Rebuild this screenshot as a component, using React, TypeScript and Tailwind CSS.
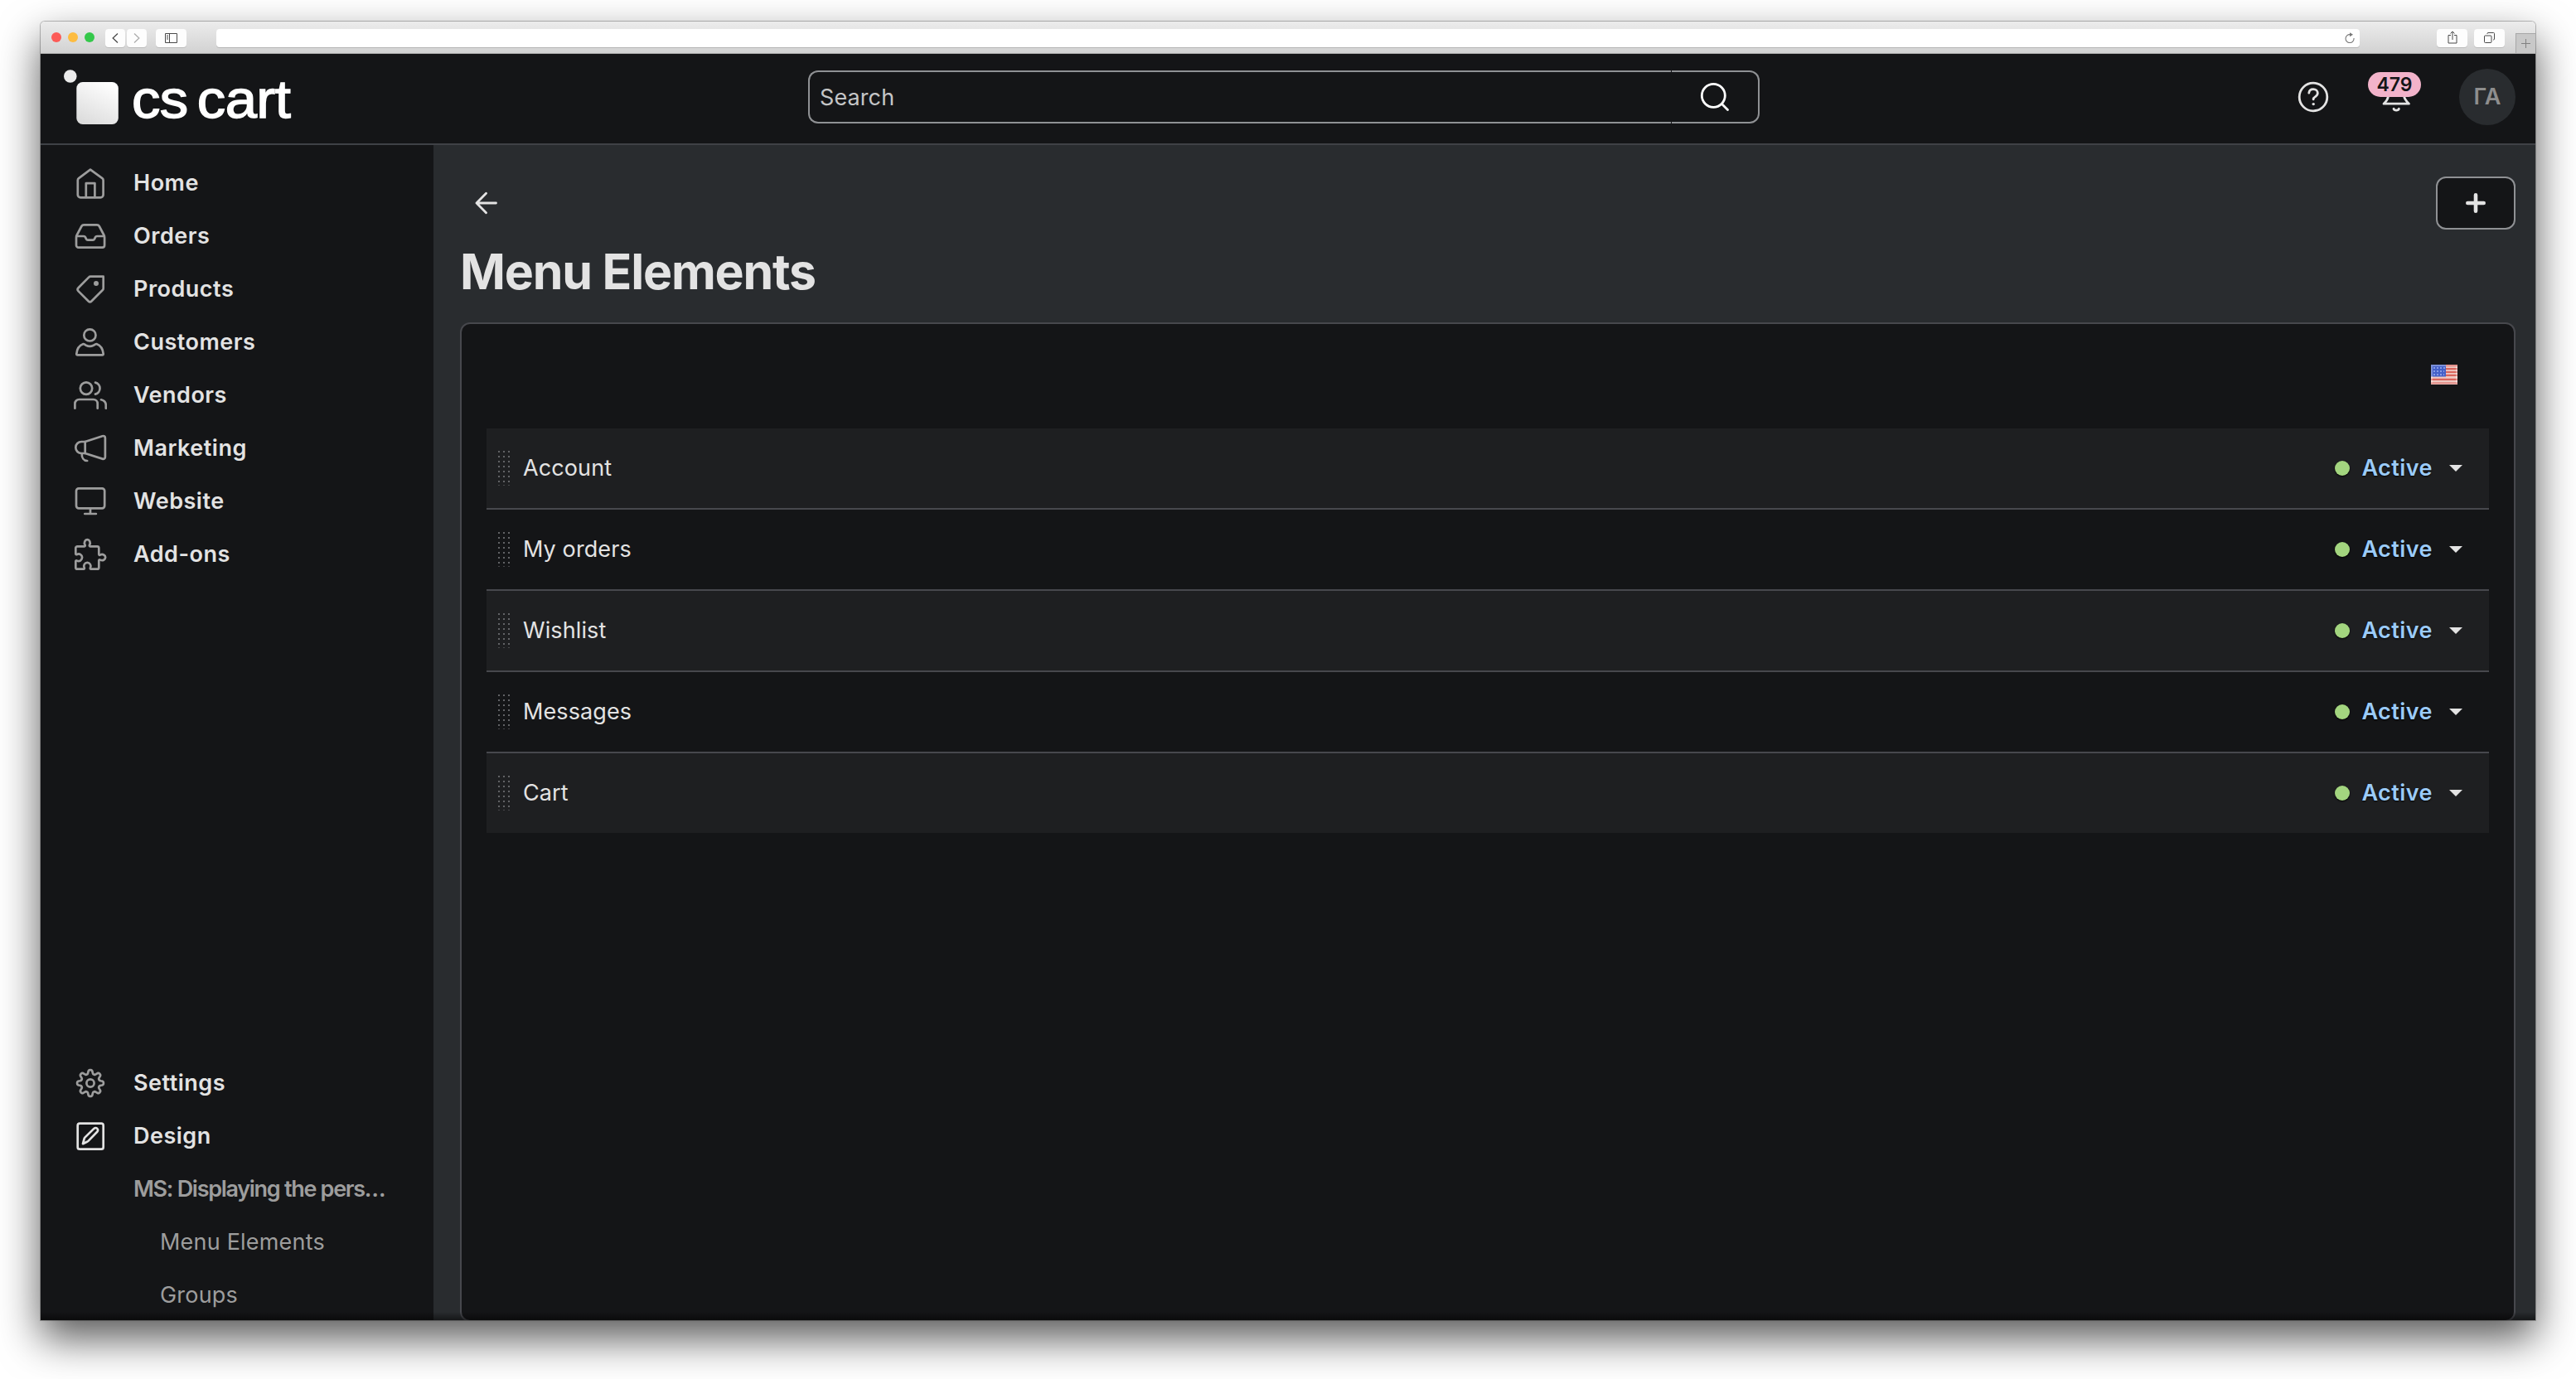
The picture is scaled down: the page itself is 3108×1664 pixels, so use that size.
import type { ReactNode } from "react";
import clsx from "clsx";

type NavItem = {
  label: string;
  icon: ReactNode;
  active?: boolean;
};

// gear outline with eight rounded teeth
const gearPoints = Array.from({ length: 144 }, (_, i) => {
  const a = (i / 144) * Math.PI * 2;
  const r = 13.6 + 2.3 * Math.tanh(1.7 * Math.cos(a * 8)) / 0.935;
  return `${(20 + r * Math.cos(a)).toFixed(2)},${(20 + r * Math.sin(a)).toFixed(2)}`;
}).join(" ");

const mainNav: NavItem[] = [
  {
    label: "Home",
    icon: (
      <>
        <path d="M4.8 16.4c0-1 .4-1.7 1.2-2.3L20 3.6l14.4 10.5c.8.6 1.2 1.3 1.2 2.3V34a3.3 3.3 0 0 1-3.3 3.3H8.1A3.3 3.3 0 0 1 4.8 34z" />
        <path d="M14.8 37V20.2h10.6V37" />
      </>
    ),
  },
  {
    label: "Orders",
    icon: (
      <>
        <path d="M12.2 6.3h15.8c1.3 0 2.2.6 2.8 1.7L36.3 18.5c.6 1.1.8 2 .8 3.2V31a2.7 2.7 0 0 1-2.7 2.7H5.7A2.7 2.7 0 0 1 3 31v-9.3c0-1.2.2-2.1.8-3.2L9.4 8c.6-1.1 1.5-1.7 2.8-1.7z" />
        <path d="M3.3 20h8.7c1 0 1.6.4 2 1.2l1 2.2c.4.9 1 1.3 2 1.3h6c1 0 1.6-.4 2-1.3l1-2.2c.4-.8 1-1.2 2-1.2h8.8" />
      </>
    ),
  },
  {
    label: "Products",
    icon: (
      <>
        <path d="M20.3 4.7h15.4v14.2c0 .8-.3 1.5-.9 2.1L21.6 34.3c-1.3 1.3-2.8 1.3-4.1 0L5.6 22.4c-1.3-1.3-1.3-2.8 0-4.1L18.1 5.6c.6-.6 1.3-.9 2.2-.9z" />
        <circle cx="27" cy="13" r="3" fill="currentColor" stroke="none" />
      </>
    ),
  },
  {
    label: "Customers",
    icon: (
      <>
        <circle cx="19.4" cy="11.4" r="7.1" />
        <path d="M11.5 22c-4.8 1.8-7.8 6.5-8.2 12-.1.9.4 1.4 1.3 1.4h29.8c.9 0 1.4-.5 1.3-1.4-.5-5.5-3.4-10.2-8.2-12-1.4 0-2 1-3.7 1.8-2.7 1.3-6.2 1.3-8.9 0-1.5-.8-2.2-1.8-3.4-1.8z" />
      </>
    ),
  },
  {
    label: "Vendors",
    icon: (
      <>
        <circle cx="15" cy="11.6" r="7.2" />
        <path d="M26 4.6a7.2 7.2 0 0 1 0 14" />
        <path d="M1.4 35.7V30a5 5 0 0 1 5-5h17.3a5 5 0 0 1 5 5v5.7" />
        <path d="M33 25.3c3.6.9 5.8 3.3 5.8 6.7v3.7" />
      </>
    ),
  },
  {
    label: "Marketing",
    icon: (
      <>
        <path d="M13.7 12 34.5 5.2c2-.6 3.4.4 3.4 2.4v22.6c0 2-1.4 3-3.4 2.4L13.7 26z" />
        <path d="M13.7 12H9.3a7 7 0 0 0 0 14h4.4" />
        <path d="M9.7 26.4c-.2 4.6 2.2 8.4 6.5 8.6" />
      </>
    ),
  },
  {
    label: "Website",
    icon: (
      <>
        <rect x="3" y="4.3" width="34.2" height="24" rx="3" />
        <path d="M20 28.5V35M13.3 35h13.6" />
      </>
    ),
  },
  {
    label: "Add-ons",
    icon: (
      <path d="M4.3 10.3h8.5c.9 0 1.2-.8.8-1.6-1.8-3 0-6.5 2.7-6.5s4.500 3.500 2.700 6.500c-.4.800-.1 1.600.8 1.600h8.500a2 2 0 0 1 2 2v7.500c0 .9.800 1.200 1.600.8 3-1.600 6.300.3 6.300 3s-3.300 4.600-6.300 3c-.8-.4-1.600-.1-1.600.8v8.300a2 2 0 0 1-2 2h-7.500c-.9 0-1.200-.8-.8-1.600 1.600-3-.8-6.200-3.700-6.200s-5.200 3.200-3.600 6.200c.4.800.1 1.600-.8 1.600H4.300a2 2 0 0 1-2-2v-7.300c0-.9.800-1.200 1.600-.8 3 1.600 6.200-1 6.200-4s-3.200-5.200-6.200-3.600c-.8.4-1.600.1-1.600-.8v-6.900a2 2 0 0 1 2-2z" />
    ),
  },
];

const bottomNav: NavItem[] = [
  {
    label: "Settings",
    icon: (
      <>
        <polygon points={gearPoints} />
        <circle cx="20" cy="20" r="4.6" />
      </>
    ),
  },
  {
    label: "Design",
    active: true,
    icon: (
      <>
        <rect x="4.7" y="4.7" width="31" height="31" rx="2.5" />
        <path d="M11 29.2l1.6-6.1c.2-.7.5-1.2 1-1.7L24.3 10.9c1.3-1.2 2.9-1.2 4 0 1.1 1.1 1.1 2.7-.1 3.9L17.7 25.6c-.5.5-1 .8-1.7 1.1z" />
      </>
    ),
  },
];

const elements = ["Account", "My orders", "Wishlist", "Messages", "Cart"];

function BrowserBar() {
  return (
    <div className="flex h-[39px] shrink-0 items-center border-b border-[#adadad] bg-linear-to-b from-[#ececec] to-[#d2d2d2] pl-[13px]">
      <div className="flex gap-2">
        <span className="h-3 w-3 rounded-full bg-[#fc5b57]" />
        <span className="h-3 w-3 rounded-full bg-[#fdbc40]" />
        <span className="h-3 w-3 rounded-full bg-[#34c84a]" />
      </div>
      <div className="ml-[13px] mt-px flex gap-0.5">
        <div className="flex h-[22px] w-6 items-center justify-center rounded-[4px] bg-[#fdfdfd] shadow-[0_1px_0_#bcbcbc]">
          <svg className="h-3 w-2" viewBox="0 0 8 12" fill="none" stroke="#4a4a4a" strokeWidth="1.3">
            <path d="M7 .6 1.2 6 7 11.4" />
          </svg>
        </div>
        <div className="flex h-[22px] w-6 items-center justify-center rounded-[4px] bg-[#fdfdfd] shadow-[0_1px_0_#bcbcbc]">
          <svg className="h-3 w-2" viewBox="0 0 8 12" fill="none" stroke="#adadad" strokeWidth="1.3">
            <path d="M1 .6 6.8 6 1 11.4" />
          </svg>
        </div>
      </div>
      <div className="ml-[11px] mt-px flex h-[22px] w-[37px] items-center justify-center rounded-[4px] bg-[#fdfdfd] shadow-[0_1px_0_#bcbcbc]">
        <svg className="h-3 w-[15px]" viewBox="0 0 15 12" fill="none" stroke="#4a4a4a">
          <path d="M.5.5h14v11H.5zM5.5.5v11M2 3h2M2 5h2M2 7h2" />
        </svg>
      </div>
      <div className="ml-9 mt-px flex h-[22px] w-[2586px] items-center justify-end rounded-[4px] bg-white pr-1.5 shadow-[0_1px_0_#b5b5b5]">
        <svg className="h-[13px] w-3" viewBox="0 0 12 13" fill="none" stroke="#777" strokeWidth="1.1">
          <path d="M6.5 2.6A5 5 0 1 0 11 7" />
          <path d="M6 .2 10 2.7 6 5.2z" fill="#777" stroke="none" />
        </svg>
      </div>
      <div className="ml-[93px] mt-px flex h-[22px] w-[37px] items-center justify-center rounded-[4px] bg-[#fdfdfd] shadow-[0_1px_0_#bcbcbc]">
        <svg className="mb-px h-4 w-3" viewBox="0 0 12 16" fill="none" stroke="#4a4a4a">
          <path d="M4 5.5H1V15h10V5.5H8M6 11V1.2M3.5 3.5 6 1l2.5 2.5" />
        </svg>
      </div>
      <div className="ml-2 mt-px flex h-[22px] w-[37px] items-center justify-center rounded-[4px] bg-[#fdfdfd] shadow-[0_1px_0_#bcbcbc]">
        <svg className="h-[13px] w-[13px]" viewBox="0 0 13 13" fill="none" stroke="#4a4a4a">
          <rect x=".5" y="4" width="8.5" height="8.5" rx="1" />
          <path d="M4 2v-.5a1 1 0 0 1 1-1h6.5a1 1 0 0 1 1 1V8a1 1 0 0 1-1 1H11" />
        </svg>
      </div>
      <div className="ml-auto flex h-6 w-6 items-center justify-center self-end border-l border-t border-[#a8a8a8] bg-[#c8c8c8]">
        <svg className="h-[11px] w-[11px]" viewBox="0 0 11 11" stroke="#808080">
          <path d="M5.5 0v11M0 5.5h11" />
        </svg>
      </div>
    </div>
  );
}

function Logo() {
  return (
    <div className="flex w-[898px] shrink-0 items-center">
      <svg className="h-[66px] w-[66px]" viewBox="0 0 66 66">
        <defs>
          <linearGradient id="tile" x1=".75" y1="0" x2=".25" y2="1">
            <stop offset="0" stopColor="#fff" />
            <stop offset="1" stopColor="#dcdcdc" />
          </linearGradient>
        </defs>
        <circle cx="7.8" cy="8" r="7.8" fill="#ebebeb" />
        <rect x="15.3" y="15" width="50.5" height="51" rx="7.5" fill="url(#tile)" />
      </svg>
      <span className="ml-4 mt-1.5 origin-left scale-x-[1.075] whitespace-nowrap font-['Liberation_Sans'] text-[64px] leading-none tracking-[-0.5px] text-white [-webkit-text-stroke:1.4px_white] [word-spacing:-7px]">
        cs cart
      </span>
    </div>
  );
}

function SearchBox() {
  return (
    <div className="flex h-16 w-[1148px] shrink-0 gap-px">
      <div className="flex w-[1041px] items-center rounded-l-xl border-y-2 border-l-2 border-[#8f9194] pl-3 pt-0.5">
        <span className="text-[27px] tracking-[0.1px] text-[#c4c5c6]">Search</span>
      </div>
      <div className="flex flex-1 items-center rounded-r-xl border-y-2 border-r-2 border-[#8f9194] pl-[34px]">
        <svg className="h-9 w-9" viewBox="0 0 36 36" fill="none" stroke="#fff" strokeWidth="2.8" strokeLinecap="round">
          <circle cx="16.3" cy="16.3" r="14" />
          <path d="M26.5 26.5 33.5 33.5" />
        </svg>
      </div>
    </div>
  );
}

function Header() {
  return (
    <header className="flex h-[110px] shrink-0 items-center border-b-2 border-[#3f4146] bg-[#141517] pb-1 pl-7 pr-6">
      <Logo />
      <SearchBox />
      <div className="ml-auto flex items-center">
        <svg className="h-10 w-10 text-[#e3e3e3]" viewBox="0 0 40 40" fill="none" stroke="currentColor" strokeWidth="2.8" strokeLinecap="round">
          <circle cx="20" cy="20" r="16.8" />
          <path d="M14.8 15.2c.3-2.8 2.3-4.5 5.2-4.5 3.1 0 5.3 1.8 5.3 4.6 0 2-1 3.2-2.8 4.3-1.8 1.1-2.4 1.7-2.4 3.3" />
          <circle cx="20.2" cy="28.6" r="1.7" fill="currentColor" stroke="none" />
        </svg>
        <div className="relative ml-[60px] h-10 w-10">
          <svg className="h-10 w-10 text-[#e3e3e3]" viewBox="0 0 40 40" fill="none" stroke="currentColor" strokeWidth="2.8" strokeLinecap="round" strokeLinejoin="round">
            <path d="M10.5 12v6c0 3.5-1.5 6.5-5.5 10.2h30.5c-4-3.7-6-6.7-6-10.2v-6" />
            <path d="M17 34.3c.8 2.4 5.6 2.4 6.4 0" />
          </svg>
          <span className="absolute -left-3.5 -top-2.5 flex h-[30px] w-16 items-center justify-center rounded-full bg-[#f2b3ca] text-[23px] font-semibold leading-none text-[#141517]">
            479
          </span>
        </div>
        <div className="ml-14 flex h-[68px] w-[68px] items-center justify-center rounded-full bg-[#292c2f] pt-px text-[27px] font-semibold text-[#8e8e8e]">
          ГА
        </div>
      </div>
    </header>
  );
}

function NavRow({ item }: { item: NavItem }) {
  return (
    <div className="flex h-16 shrink-0 items-center pl-10">
      <svg
        className={clsx("h-10 w-10", item.active ? "text-[#e3e3e3]" : "text-[#9d9d9d]")}
        viewBox="0 0 40 40"
        fill="none"
        stroke="currentColor"
        strokeWidth="2.7"
        strokeLinecap="round"
        strokeLinejoin="round"
      >
        {item.icon}
      </svg>
      <span className="ml-8 pt-px text-[27px] font-semibold tracking-[0.5px] text-[#e3e3e3]">{item.label}</span>
    </div>
  );
}

function Sidebar() {
  return (
    <nav className="flex w-[474px] shrink-0 flex-col bg-[#141517] pt-3.5">
      {mainNav.map((item) => (
        <NavRow key={item.label} item={item} />
      ))}
      <div className="mt-[574px] shrink-0">
        {bottomNav.map((item) => (
          <NavRow key={item.label} item={item} />
        ))}
        <div className="flex h-16 items-center whitespace-nowrap pl-28 pt-px text-[27px] font-semibold tracking-[-1.3px] text-[#9d9d9d]">
          MS: Displaying the pers…
        </div>
        <div className="flex h-16 items-center pl-36 pt-px text-[27px] tracking-[0.2px] text-[#9d9d9d]">Menu Elements</div>
        <div className="flex h-16 items-center pl-36 pt-px text-[27px] tracking-[0.2px] text-[#9d9d9d]">Groups</div>
      </div>
    </nav>
  );
}

function Flag() {
  return (
    <svg className="h-6 w-8" viewBox="0 0 32 24">
      <rect width="32" height="24" fill="#eec9c3" />
      <path d="M0 1.2h32M0 5.2h32M0 9h32M0 12.8h32M0 17.8h32M0 22.5h32" stroke="#d9655c" strokeWidth="2.2" />
      <rect width="18" height="14.5" fill="#4460c8" />
      <path d="M3 4h14M3 8h13M3 12h13" stroke="#9db0ee" strokeWidth="1.6" strokeDasharray="2 2" />
      <rect x="1" y="1" width="30" height="22" fill="none" stroke="#fff" strokeOpacity=".3" strokeWidth="2" />
    </svg>
  );
}

function DragHandle() {
  return (
    <svg className="h-[42px] w-3.5" viewBox="0 0 14 42" fill="#626366">
      {[0, 6, 12, 18, 24, 30, 36].map((y) =>
        [0, 6, 12].map((x) => <rect key={`${x}-${y}`} x={x} y={y} width="2" height="2" />),
      )}
      {[0, 6, 12].map((x) => (
        <rect key={x} x={x} y="41" width="2" height="1" opacity=".6" />
      ))}
    </svg>
  );
}

function ElementRow({ name }: { name: string }) {
  return (
    <div className="flex h-[98px] items-center border-b-2 border-[#47484d] pl-3.5 pr-8 odd:bg-[#1e1f21] last:h-24 last:border-b-0">
      <DragHandle />
      <span className="ml-4 text-[27px] tracking-[0.1px] text-[#e3e3e3]">{name}</span>
      <span className="ml-auto h-[18px] w-[18px] rounded-full bg-[#a3d57f] shadow-[0_1px_2px_#000]" />
      <span className="ml-3.5 text-[27px] font-semibold tracking-[0.45px] text-[#9bcbf8] [text-shadow:0_1px_2px_#000]">
        Active
      </span>
      <svg className="ml-5 h-2 w-4" viewBox="0 0 16 8">
        <path d="M0 0h16L8 8z" fill="#e3e3e3" />
      </svg>
    </div>
  );
}

export default function App() {
  return (
    <div className="h-[1664px] w-[3108px] overflow-hidden bg-white px-[49px] pt-[26px] font-['Inter',sans-serif]">
      <div className="rounded-t-[5px] shadow-[0_0_0_1px_rgba(0,0,0,0.25),0_22px_50px_rgba(0,0,0,0.66)]">
        <div className="relative flex h-[1567px] w-[3010px] flex-col overflow-hidden rounded-t-[5px]">
          <BrowserBar />
          <Header />
          <div className="flex min-h-0 flex-1">
            <Sidebar />
            <main className="flex-1 bg-[#292c2f] pl-8 pr-6 pt-[38px]">
              <div className="flex h-16 items-center justify-between">
                <svg className="ml-4 h-8 w-8" viewBox="0 0 32 32" fill="none" stroke="#e3e3e3" strokeWidth="2.8" strokeLinecap="round" strokeLinejoin="round">
                  <path d="M27.5 16H4M15.5 4.3 4 16l11.5 11.7" />
                </svg>
                <button className="flex h-16 w-24 items-center justify-center rounded-xl border-2 border-[#8f9194] bg-[#141517]">
                  <svg className="h-6 w-6" viewBox="0 0 24 24" stroke="#e3e3e3" strokeWidth="4.6" strokeLinecap="round">
                    <path d="M12 2.3v19.4M2.3 12h19.4" />
                  </svg>
                </button>
              </div>
              <h1 className="mt-[15px] h-[72px] text-[59px] font-bold leading-[72px] tracking-[-1.2px] text-[#e3e3e3]">
                Menu Elements
              </h1>
              <section className="mt-[25px] h-[1206px] rounded-xl border-2 border-[#47484d] bg-[#141517] px-[30px] pt-[49px]">
                <div className="flex h-[77px] justify-end pr-[38px]">
                  <Flag />
                </div>
                <div>
                  {elements.map((name) => (
                    <ElementRow key={name} name={name} />
                  ))}
                </div>
              </section>
            </main>
          </div>
          <div className="pointer-events-none absolute inset-x-0 bottom-0 h-2.5 bg-linear-to-b from-transparent to-black/50" />
        </div>
      </div>
    </div>
  );
}
